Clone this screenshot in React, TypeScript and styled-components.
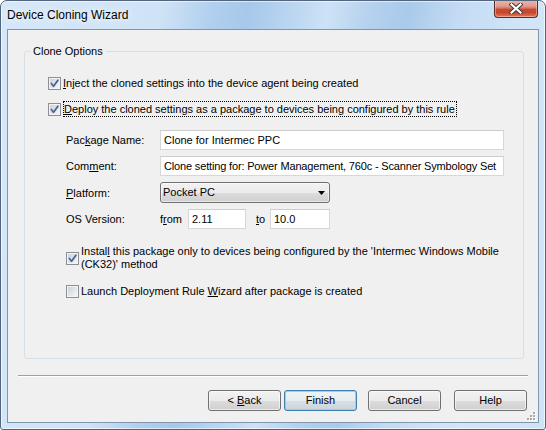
import React from 'react';
import styled, { createGlobalStyle } from 'styled-components';

const GlobalStyle = createGlobalStyle`
  html, body { margin: 0; padding: 0; background: #ffffff; }
  body {
    font-family: "Liberation Sans", Arial, sans-serif;
    font-size: 11px;
    color: #000;
  }
  * { box-sizing: border-box; }
`;

const Window = styled.div`
  width: 546px;
  height: 430px;
  display: flex;
  flex-direction: column;
  padding: 0 6px 6px;
  border: 1px solid #52657c;
  border-radius: 7px 7px 3px 3px;
  overflow: hidden;
  background:
    linear-gradient(100deg,
      #d5e7f8 0%, #d0e3f6 26%, #b2d0ee 34%, #a6c8ea 40%, #bcd7f1 48%,
      #cde2f6 53%, #b5d1ee 60%, #a9caea 66%, #c3dbf3 74%, #d3e6f8 86%, #cfe3f7 100%);
  box-shadow: inset 0 0 0 1px rgba(255, 255, 255, 0.6);
`;

const TitleBar = styled.div`
  height: 28px;
  flex: none;
  display: flex;
  align-items: flex-start;
  justify-content: space-between;
`;

const Title = styled.div`
  margin: 7px 0 0 0;
  font-size: 12px;
  line-height: 15px;
  white-space: nowrap;
  text-shadow: 0 0 6px rgba(255, 255, 255, 0.95), 0 0 10px rgba(255, 255, 255, 0.8);
`;

const CloseButton = styled.div`
  width: 44px;
  height: 18px;
  margin: -1px 1px 0 0;
  display: flex;
  align-items: center;
  justify-content: center;
  border: 1px solid #5a2b22;
  border-top: none;
  border-radius: 0 0 4px 4px;
  background: linear-gradient(180deg,
    #ecb6ab 0%, #e19c8f 35%, #d47767 48%, #c44a31 55%, #c8472c 75%, #df7c5c 100%);
  box-shadow: inset 0 0 0 1px rgba(255, 220, 210, 0.45);
`;

const Client = styled.div`
  flex: 1;
  position: relative;
  display: flex;
  flex-direction: column;
  border: 1px solid #8196ad;
  background: #f0f0f0;
`;

const GroupBox = styled.fieldset`
  flex: 1;
  min-width: 0;
  margin: 15px 14px 0 16px;
  padding: 19px 19px 0 23px;
  border: 1px solid #d5dfe5;
  border-radius: 3px;
  display: flex;
  flex-direction: column;
`;

const Legend = styled.legend`
  margin-left: -18px;
  padding: 0 3px;
  line-height: 13px;
`;

const CheckRow = styled.div<{ $mt?: number }>`
  display: flex;
  align-items: center;
  gap: 2px;
  margin-top: ${(p) => p.$mt ?? 0}px;
  line-height: 13px;
  white-space: nowrap;
`;

const Box = styled.span`
  position: relative;
  flex: none;
  width: 13px;
  height: 13px;
  border: 1px solid #8e8f8f;
  background: linear-gradient(135deg, #c9ced4 0%, #e4e7ea 55%, #f7f7f7 100%);
  box-shadow: inset 0 0 0 1px #f4f4f4;
`;

const CheckMark = styled.svg`
  position: absolute;
  left: -1px;
  top: -1px;
`;

const FocusText = styled.span`
  display: inline-block;
  border: 1px dotted #000;
  padding: 1px 1px 0 0;
  margin: -2px 0 -1px 0;
`;

const Key = styled.span`
  text-decoration: underline;
  text-underline-offset: 1px;
`;

const Indent = styled.div`
  display: flex;
  flex-direction: column;
  padding-left: 18px;
`;

const FieldList = styled.div`
  display: flex;
  flex-direction: column;
  gap: 6px;
  margin-top: 14px;
`;

const FieldRow = styled.div`
  display: flex;
  align-items: center;
`;

const FieldLabel = styled.div<{ $w: number; $ml?: number }>`
  flex: none;
  width: ${(p) => p.$w}px;
  margin-left: ${(p) => p.$ml ?? 0}px;
  line-height: 13px;
  padding-top: 1px;
  white-space: nowrap;
`;

const TextBox = styled.div<{ $w: number; $tight?: boolean }>`
  flex: none;
  width: ${(p) => p.$w}px;
  height: 20px;
  padding: ${(p) => (p.$tight ? '0 1px 0 3px' : '0 3px')};
  border: 1px solid #d7d7d7;
  border-top-color: #cdcdcd;
  background: #fff;
  line-height: 18px;
  letter-spacing: ${(p) => (p.$tight ? '-0.16px' : 'normal')};
  white-space: nowrap;
  overflow: hidden;
`;

const Combo = styled.div`
  flex: none;
  width: 170px;
  height: 21px;
  display: flex;
  align-items: center;
  justify-content: space-between;
  padding: 0 4px 0 2px;
  border: 1px solid #707070;
  border-radius: 3px;
  background: linear-gradient(180deg, #f2f2f2 0%, #ebebeb 50%, #dddddd 50%, #cfcfcf 100%);
  box-shadow: inset 0 0 0 1px rgba(255, 255, 255, 0.55);
  line-height: 13px;
`;

const Separator = styled.div`
  flex: none;
  margin: 16px 10px 0 10px;
  border-top: 1px solid #a0a0a0;
  border-bottom: 1px solid #ffffff;
`;

const ButtonRow = styled.div`
  flex: none;
  display: flex;
  justify-content: flex-end;
  margin-top: 13px;
  padding: 0 11px 11px 0;
`;

const PushButton = styled.div<{ $default?: boolean; $ml: number }>`
  width: 73px;
  height: 21px;
  margin-left: ${(p) => p.$ml}px;
  display: flex;
  align-items: center;
  justify-content: center;
  line-height: 13px;
  white-space: pre;
  border: 1px solid ${(p) => (p.$default ? '#3c7fb1' : '#707070')};
  border-radius: 3px;
  background: ${(p) =>
    p.$default
      ? 'linear-gradient(180deg, #eef3f6 0%, #e6ecf0 50%, #d8e0e6 50%, #ccd5dc 100%)'
      : 'linear-gradient(180deg, #f2f2f2 0%, #ebebeb 50%, #dddddd 50%, #cfcfcf 100%)'};
  box-shadow: ${(p) =>
    p.$default ? 'inset 0 0 0 1px #8fd3f5' : 'inset 0 0 0 1px rgba(255, 255, 255, 0.6)'};
`;

const Grip = styled.svg`
  position: absolute;
  right: 2px;
  bottom: 1px;
`;

const Check: React.FC<{ checked?: boolean }> = ({ checked }) => (
  <Box>
    {checked && (
      <CheckMark width="13" height="13" viewBox="0 0 13 13">
        <path d="M3.3 6.4 L5.5 9.3 L9.9 3.2" fill="none" stroke="#c9d3e8" strokeWidth="2.6" strokeLinecap="round" strokeLinejoin="round" />
        <path d="M3.3 6.4 L5.5 9.3 L9.9 3.2" fill="none" stroke="#4a5d8d" strokeWidth="1.5" strokeLinecap="round" strokeLinejoin="round" />
      </CheckMark>
    )}
  </Box>
);

export default function App() {
  return (
    <>
      <GlobalStyle />
      <Window>
        <TitleBar>
          <Title>Device Cloning Wizard</Title>
          <CloseButton>
            <svg width="14" height="11" viewBox="0 0 14 11">
              <path d="M2.5 1.5 L11.5 9.5 M11.5 1.5 L2.5 9.5" stroke="#3d3b3b" strokeWidth="4.2" strokeLinecap="square" />
              <path d="M2.5 1.5 L11.5 9.5 M11.5 1.5 L2.5 9.5" stroke="#ffffff" strokeWidth="2.2" strokeLinecap="square" />
            </svg>
          </CloseButton>
        </TitleBar>
        <Client>
          <GroupBox>
            <Legend>Clone Options</Legend>
            <CheckRow>
              <Check checked />
              <span>
                <Key>I</Key>nject the cloned settings into the device agent being created
              </span>
            </CheckRow>
            <CheckRow $mt={13}>
              <Check checked />
              <FocusText>
                <Key>D</Key>eploy the cloned settings as a package to devices being configured by this rule
              </FocusText>
            </CheckRow>
            <Indent>
              <FieldList>
                <FieldRow>
                  <FieldLabel $w={94}>
                    Pac<Key>k</Key>age Name:
                  </FieldLabel>
                  <TextBox $w={344}>Clone for Intermec PPC</TextBox>
                </FieldRow>
                <FieldRow>
                  <FieldLabel $w={94}>
                    Com<Key>m</Key>ent:
                  </FieldLabel>
                  <TextBox $w={344} $tight>
                    Clone setting for: Power Management, 760c - Scanner Symbology Set
                  </TextBox>
                </FieldRow>
                <FieldRow>
                  <FieldLabel $w={94}>
                    <Key>P</Key>latform:
                  </FieldLabel>
                  <Combo>
                    <span>Pocket PC</span>
                    <svg width="7" height="4" viewBox="0 0 7 4">
                      <path d="M0 0 H7 L3.5 4 Z" fill="#000" />
                    </svg>
                  </Combo>
                </FieldRow>
                <FieldRow>
                  <FieldLabel $w={94}>OS Version:</FieldLabel>
                  <FieldLabel $w={28}>
                    f<Key>r</Key>om
                  </FieldLabel>
                  <TextBox $w={58}>2.11</TextBox>
                  <FieldLabel $w={14} $ml={10}>
                    <Key>t</Key>o
                  </FieldLabel>
                  <TextBox $w={60}>10.0</TextBox>
                </FieldRow>
              </FieldList>
              <CheckRow $mt={16}>
                <Check checked />
                <span>
                  Instal<Key>l</Key> this package only to devices being configured by the 'Intermec Windows Mobile
                  <br />
                  (CK32)' method
                </span>
              </CheckRow>
              <CheckRow $mt={14}>
                <Check />
                <span>
                  Launch Deployment Rule <Key>W</Key>izard after package is created
                </span>
              </CheckRow>
            </Indent>
          </GroupBox>
          <Separator />
          <ButtonRow>
            <PushButton $ml={0}>
              <span>{'<\u00a0'}</span>
              <Key>B</Key>ack
            </PushButton>
            <PushButton $ml={3} $default>
              Finish
            </PushButton>
            <PushButton $ml={11}>Cancel</PushButton>
            <PushButton $ml={13}>Help</PushButton>
          </ButtonRow>
          <Grip width="10" height="10" viewBox="0 0 10 10">
            {[
              [7, 1],
              [4, 4],
              [7, 4],
              [1, 7],
              [4, 7],
              [7, 7],
            ].map(([x, y]) => (
              <g key={`${x}-${y}`}>
                <rect x={x + 1} y={y + 1} width="2" height="2" fill="#ffffff" />
                <rect x={x} y={y} width="2" height="2" fill="#a9a9a9" />
              </g>
            ))}
          </Grip>
        </Client>
      </Window>
    </>
  );
}
